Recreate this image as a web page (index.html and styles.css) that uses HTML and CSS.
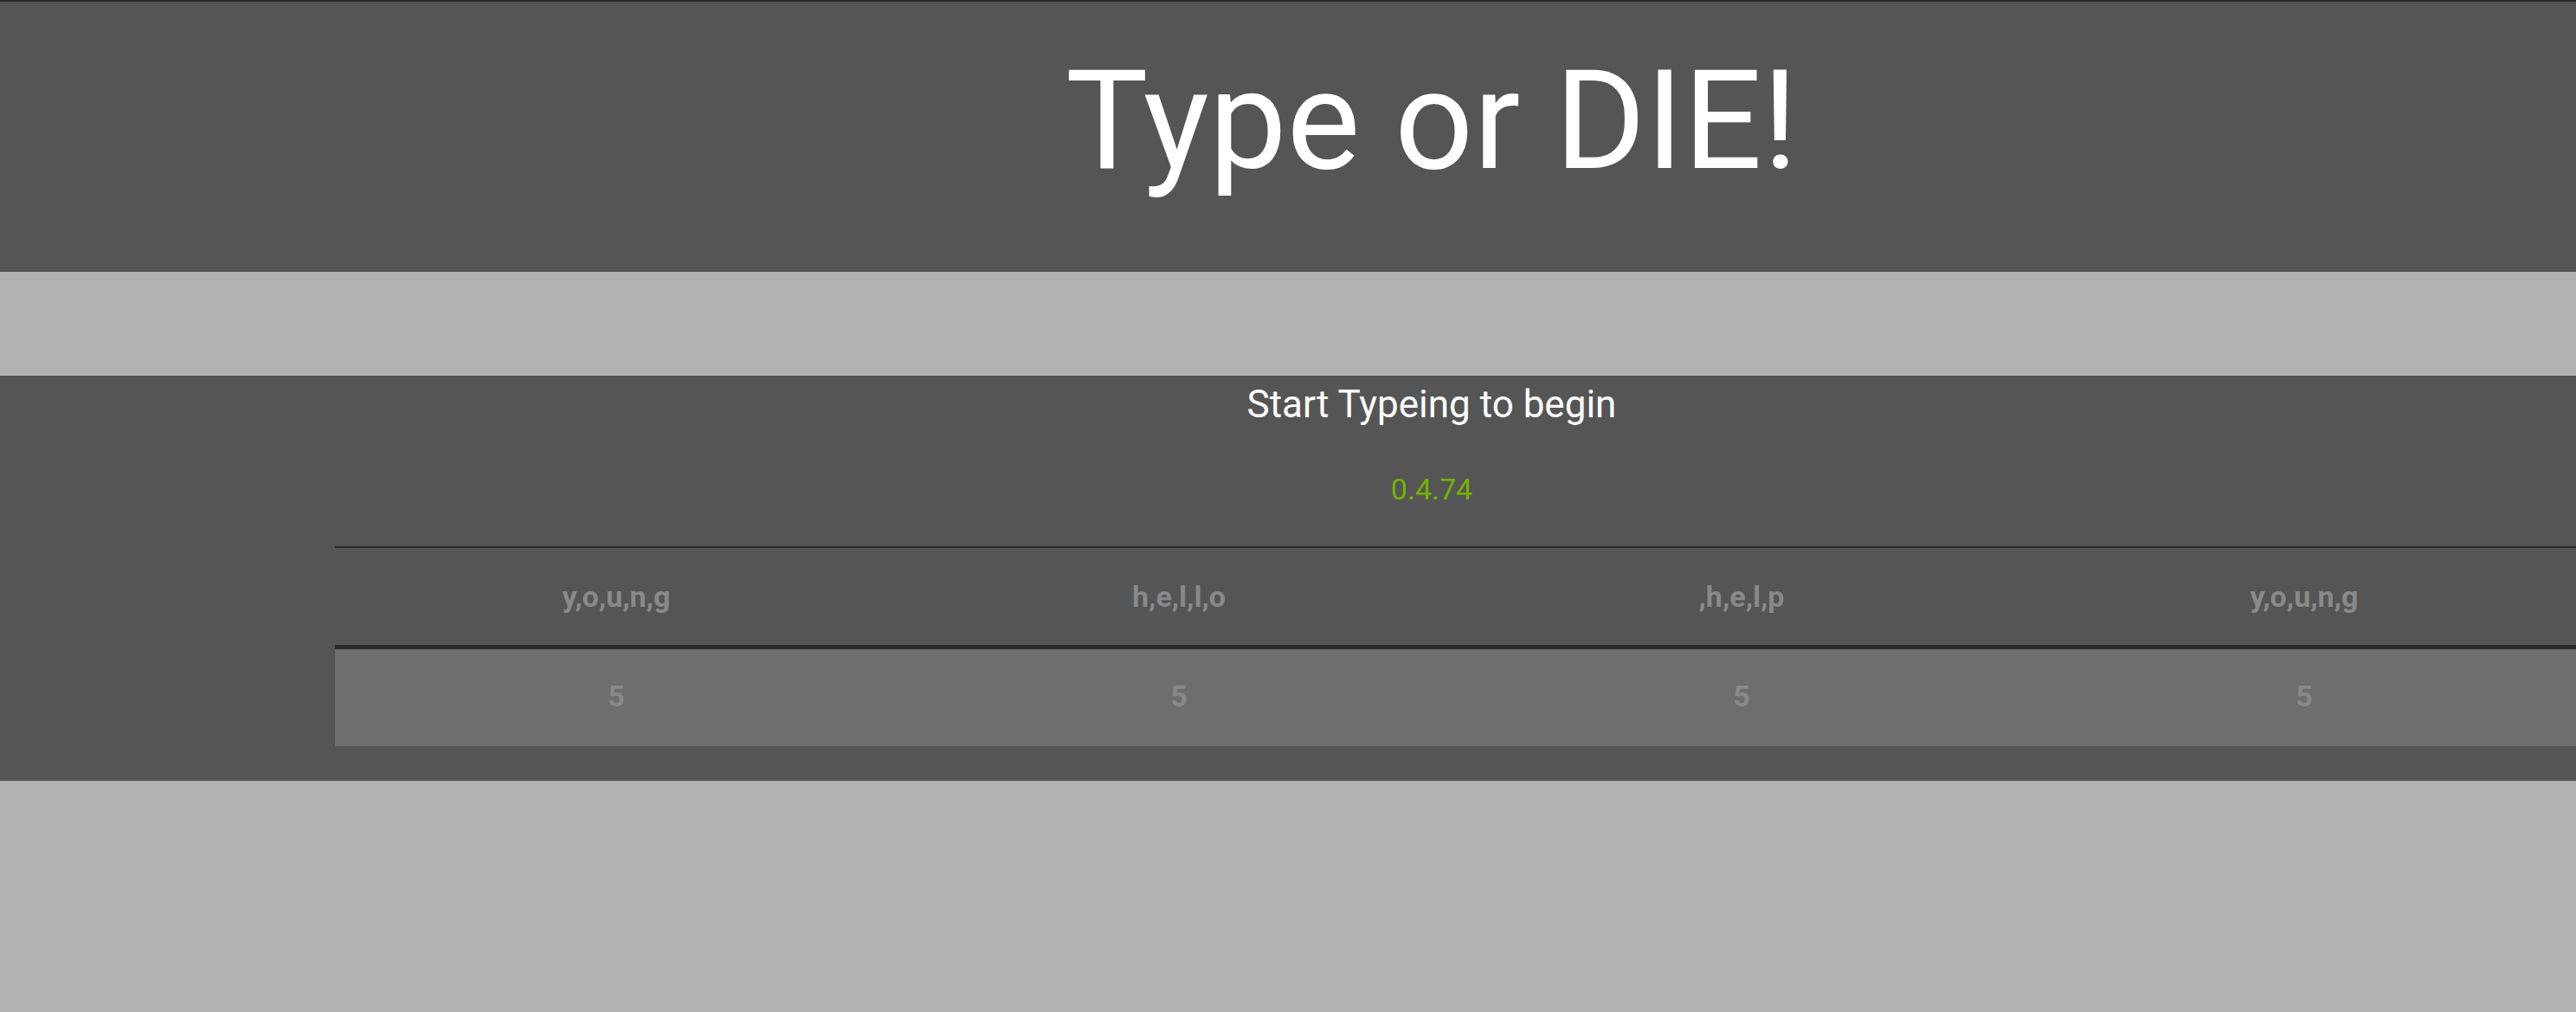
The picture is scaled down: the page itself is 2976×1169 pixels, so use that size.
FILE: index.html
```html
<!DOCTYPE html>
<html lang="en">
<head>
<meta charset="utf-8">
<title>Type or DIE!</title>
<link rel="stylesheet" href="styles.css">
</head>
<body>
<header class="top">
  <h1 class="title">Type or DIE!</h1>
</header>
<div class="spacer"></div>
<section class="game">
  <p class="prompt">Start Typeing to begin</p>
  <p class="version">0.4.74</p>
  <table class="words">
    <thead>
      <tr><th>y,o,u,n,g</th><th>h,e,l,l,o</th><th>,h,e,l,p</th><th>y,o,u,n,g</th></tr>
    </thead>
    <tbody>
      <tr><td>5</td><td>5</td><td>5</td><td>5</td></tr>
    </tbody>
  </table>
</section>
</body>
</html>
```
FILE: styles.css
```css
html, body {
  margin: 0;
  padding: 0;
}
body {
  background: #b0b2b0;
  font-family: Roboto, "Liberation Sans", sans-serif;
  overflow: hidden;
}
.top {
  box-sizing: border-box;
  height: 314px;
  background: #555555;
  border-top: 2px solid #2a2a2a;
  padding: 44px 0 0 332px;
}
.title {
  margin: 0;
  text-align: center;
  color: #ffffff;
  font-weight: 400;
  font-size: 160px;
  line-height: 188px;
}
.spacer {
  height: 120px;
}
.game {
  box-sizing: border-box;
  height: 468px;
  background: #555555;
  padding-top: 7px;
  overflow: hidden;
}
.prompt {
  margin: 0;
  padding-left: 332px;
  text-align: center;
  color: #ffffff;
  font-size: 44px;
  line-height: 52px;
}
.version {
  margin: 52px 0 0;
  padding-left: 332px;
  text-align: center;
  color: #74b300;
  font-size: 34px;
  line-height: 40px;
}
.words {
  margin: 46px 0 0 387px;
  width: 2600px;
  table-layout: fixed;
  border-collapse: separate;
  border-spacing: 0;
}
.words th,
.words td {
  padding: 36px 0;
  text-align: center;
  font-size: 34px;
  line-height: 40px;
  font-weight: 700;
  color: #898989;
}
.words th {
  border-top: 2px solid #2b2b2b;
  border-bottom: 5px solid #2b2b2b;
}
.words td {
  background: #6e6e6e;
  padding-top: 34px;
  padding-bottom: 38px;
}
```
